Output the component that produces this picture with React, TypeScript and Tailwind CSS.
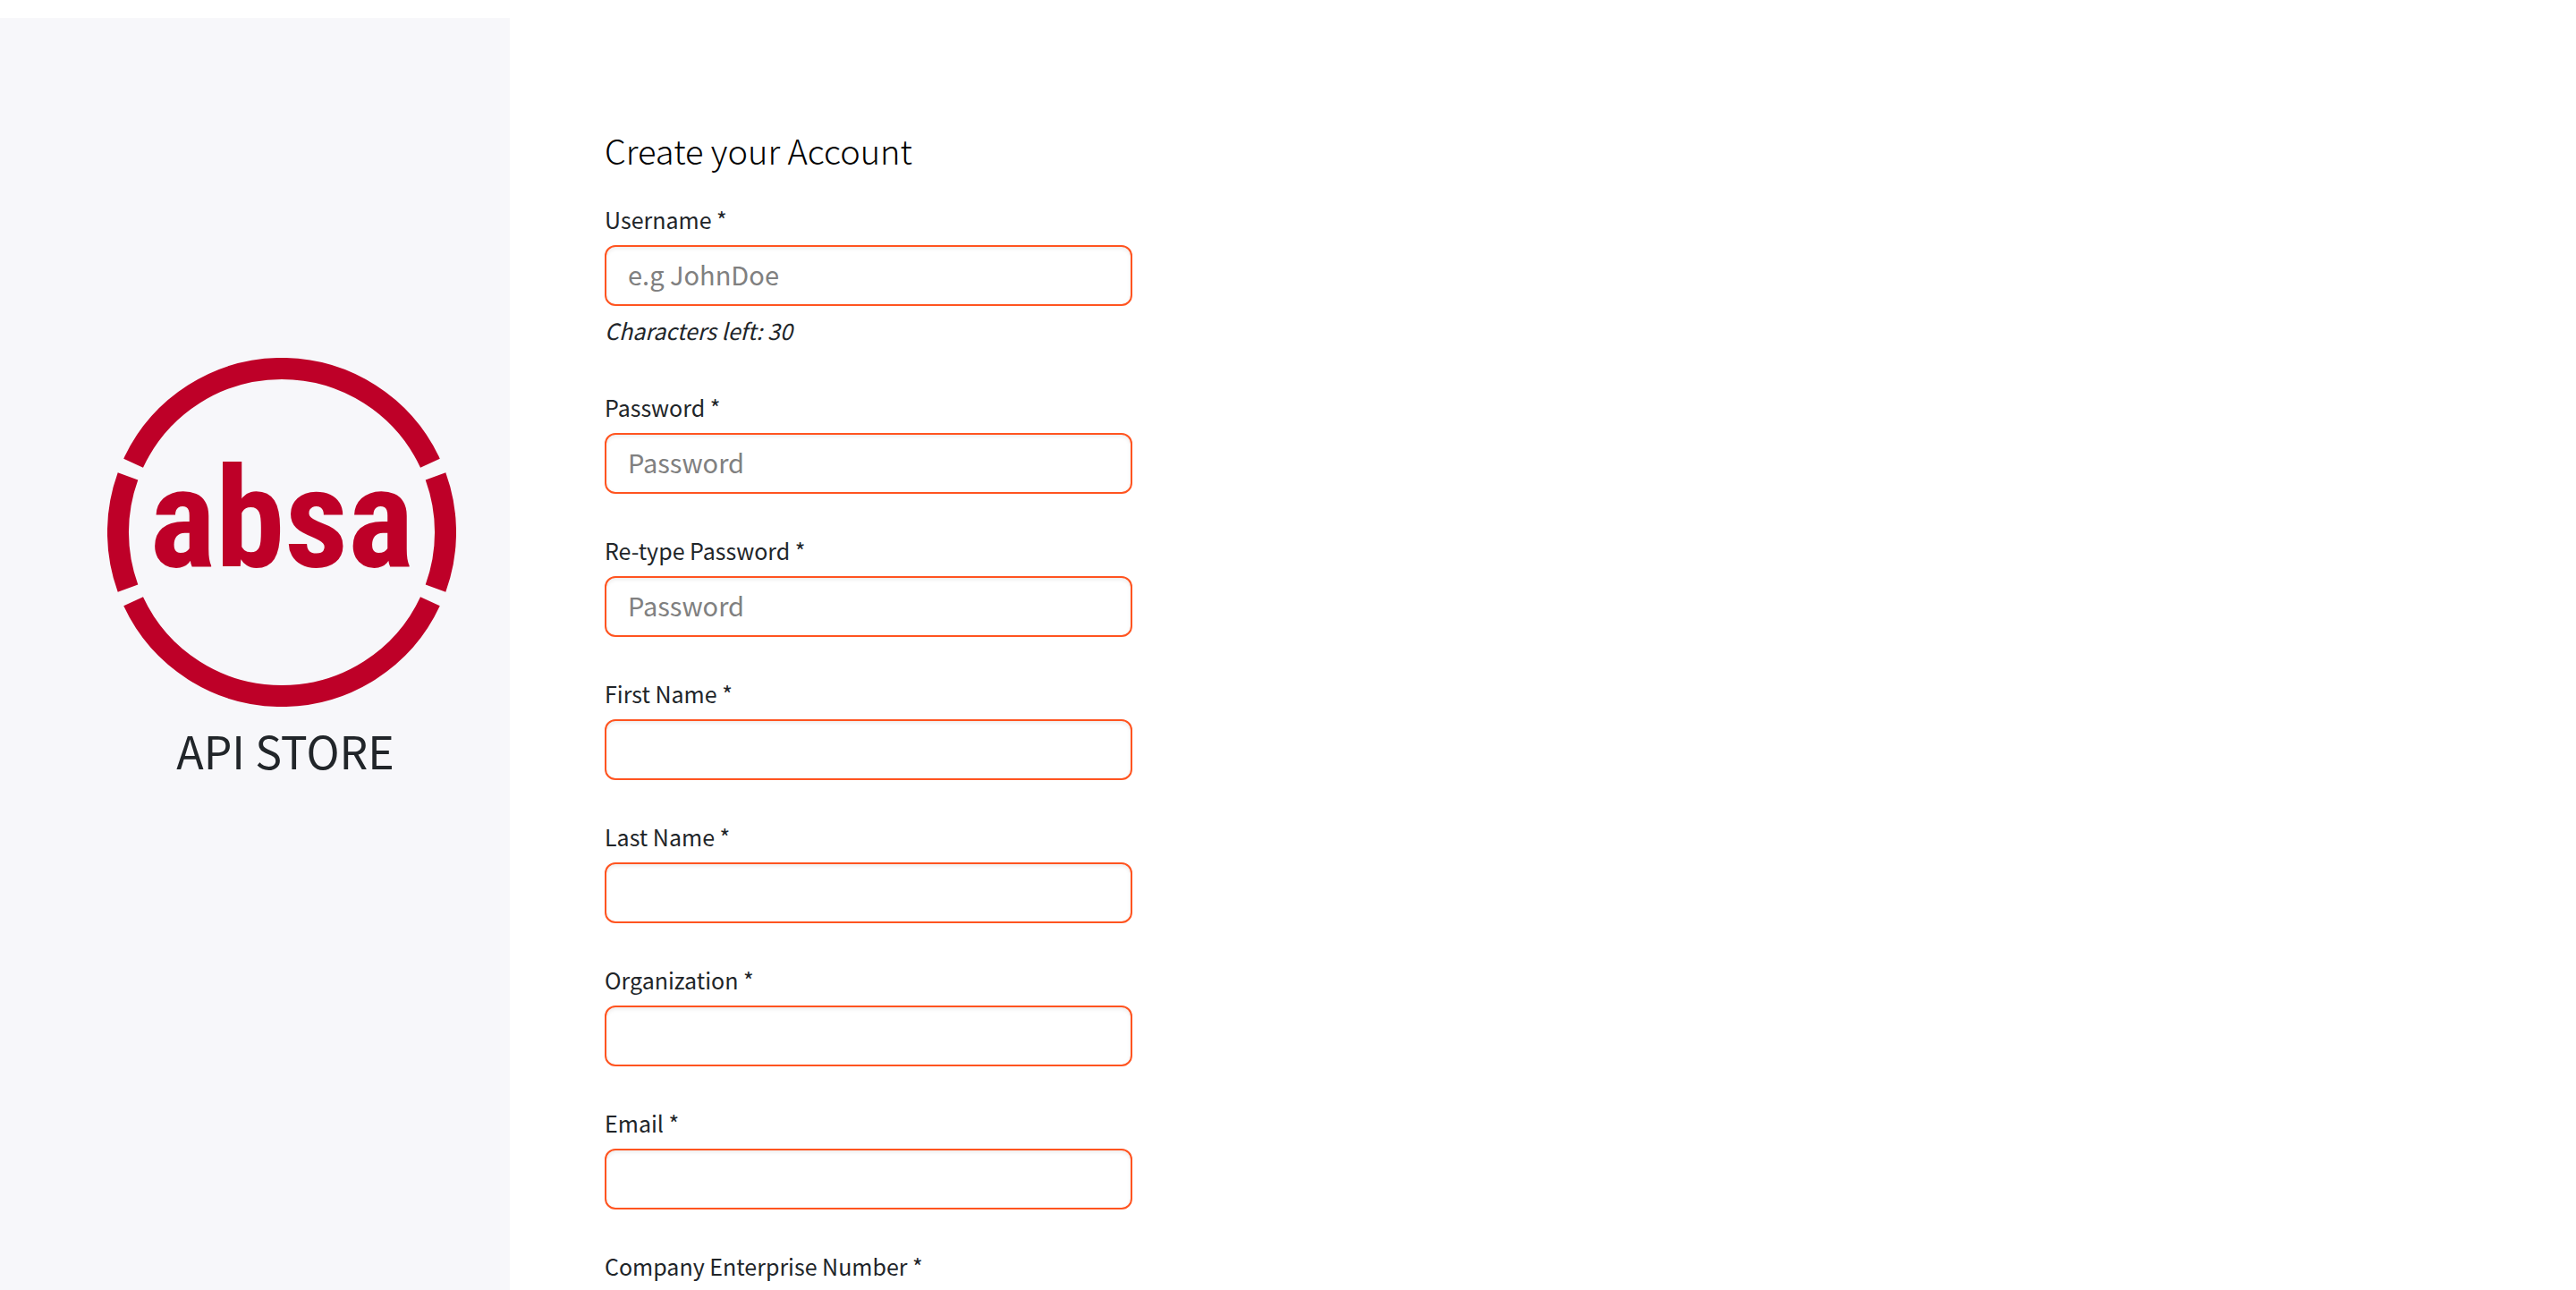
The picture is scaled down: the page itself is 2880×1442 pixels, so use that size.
type FieldProps = {
  id: string;
  label: string;
  type?: string;
  placeholder?: string;
  hint?: string;
};

const fields: FieldProps[] = [
  { id: "username", label: "Username *", placeholder: "e.g JohnDoe", hint: "Characters left: 30" },
  { id: "password", label: "Password *", type: "password", placeholder: "Password" },
  { id: "retype-password", label: "Re-type Password *", type: "password", placeholder: "Password" },
  { id: "first-name", label: "First Name *" },
  { id: "last-name", label: "Last Name *" },
  { id: "organization", label: "Organization *" },
  { id: "email", label: "Email *", type: "email" },
  { id: "company-number", label: "Company Enterprise Number *" },
];

function Field({ id, label, type = "text", placeholder, hint }: FieldProps) {
  return (
    <div className="flex flex-col">
      <label htmlFor={id} className="mb-2.5 text-[25px] leading-[38px]">
        {label}
      </label>
      <input
        id={id}
        type={type}
        placeholder={placeholder}
        className="h-[68px] w-full rounded-xl border-2 border-[#ff5420] bg-white px-6 pb-1 text-[29px] shadow-[inset_0_2px_4px_rgba(0,0,0,0.08)] outline-none placeholder:text-[#808080]"
      />
      {hint && <p className="mt-2 mb-1 text-[25px] leading-[38px] italic">{hint}</p>}
    </div>
  );
}

function Logo() {
  return (
    <svg viewBox="0 0 390 390" className="w-[390px] max-w-full" role="img" aria-label="absa">
      <g fill="none" stroke="#be0028" strokeWidth="24">
        <path d="M29.1 117.7A183 183 0 0 1 360.9 117.7" />
        <path d="M29.1 272.3A183 183 0 0 0 360.9 272.3" />
        <path d="M23 132.4A183 183 0 0 0 23 257.6" />
        <path d="M367 132.4A183 183 0 0 1 367 257.6" />
      </g>
      <text
        x="195"
        y="233"
        textAnchor="middle"
        fill="#be0028"
        className="font-['Roboto_Condensed','Roboto',sans-serif] text-[156px] font-bold"
      >
        absa
      </text>
    </svg>
  );
}

export default function App() {
  return (
    <div className="flex h-screen overflow-hidden bg-white pt-5 font-['Noto_Sans_CJK_SC',sans-serif] text-[#212529]">
      <aside className="flex w-1/5 max-w-[570px] shrink-0 flex-col items-center bg-[#f7f7fa] pt-[380px] pl-15">
        <Logo />
        <p className="mt-3 pl-2 text-[50px] leading-[72px]">API STORE</p>
      </aside>
      <main className="flex-1 px-[106px] pt-[122px]">
        <h1 className="mb-8 text-[38px] leading-[52px] font-light text-black">Create your Account</h1>
        <form className="flex max-w-[590px] flex-col gap-11">
          {fields.map((field) => (
            <Field key={field.id} {...field} />
          ))}
        </form>
      </main>
    </div>
  );
}
